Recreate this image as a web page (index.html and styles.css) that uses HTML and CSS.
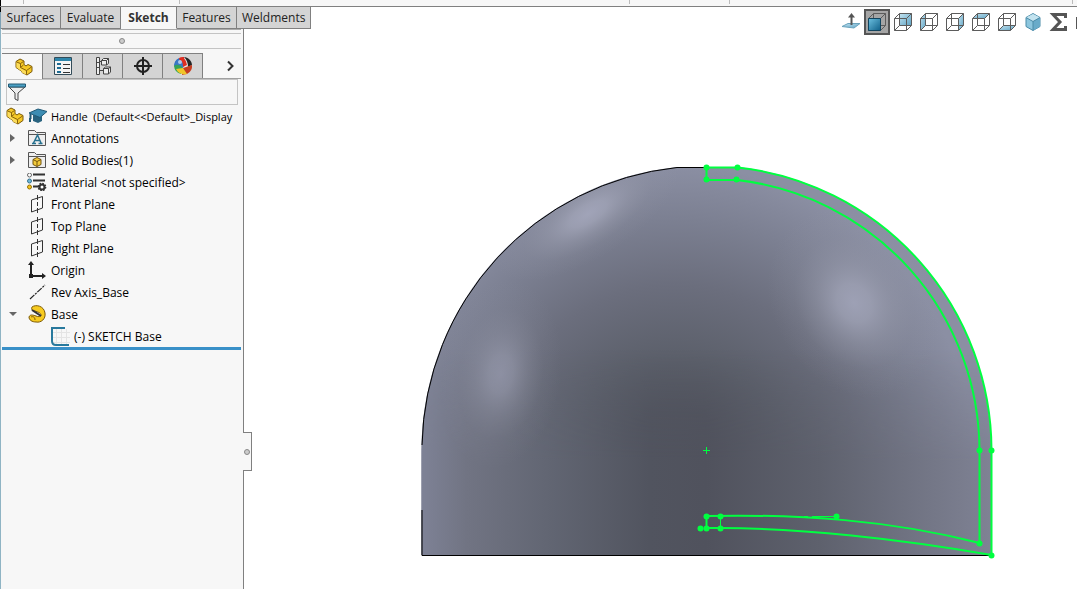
FILE: index.html
```html
<!DOCTYPE html>
<html lang="en">
<head>
    <meta charset="UTF-8">
    <meta name="viewport" content="width=device-width, initial-scale=1.0">
    <title>Handle</title>
    <link rel="stylesheet" href="styles.css">
</head>
<body>
    <!-- shared icon shapes -->
    <svg class="defs" width="0" height="0" aria-hidden="true">
        <defs>
            <linearGradient id="blue" x1="0" y1="0" x2="1" y2="1">
                <stop offset="0" stop-color="#c4e4f1"/>
                <stop offset="1" stop-color="#5fa3c4"/>
            </linearGradient>
            <linearGradient id="deep" x1="0" y1="0" x2="1" y2="1">
                <stop offset="0" stop-color="#6cc0e0"/>
                <stop offset="1" stop-color="#0f5f88"/>
            </linearGradient>
        </defs>
        <symbol id="part" viewBox="0 0 18 18">
            <path d="M1 3.500l4-2.500 4 2v3.500l2 1.500 2-1.500 4 2v5l-5 3.500-5-2.500v-1l-6-4z" fill="#f6c927" stroke="#7c5a08" stroke-linejoin="round"/>
            <path d="M1.500 4l3.500 2v4l6 3.500v3l-4-2v-1l-5.500-4z" fill="#fbdc5c"/>
            <path d="M1.500 4l4 1.500 3-2M5.500 5.500v4l6 3v4M5.500 9.500l3-2.500M11.500 12.500l5-3.500" fill="none" stroke="#8a650c"/>
        </symbol>
        <symbol id="plane" viewBox="0 0 18 18">
            <path d="M3.500 5l11-3.500v11.500l-11 4z" fill="none" stroke="#333"/>
            <path d="M9.500 0v5M9.500 7v4M9.500 13v5" stroke="#333"/>
        </symbol>
        <symbol id="folder" viewBox="0 0 18 18">
            <path d="M.5 16.500v-15h6l2 2h9v13z" fill="#eee" stroke="#555"/>
            <path d="M1 5.500h16" stroke="#555"/>
        </symbol>
        <symbol id="cube" viewBox="0 0 20 20">
            <path d="M1.500 6.500h12v12h-12zM6.500 1.500h12v12h-12zM1.500 6.500l5-5M13.500 6.500l5-5M1.500 18.500l5-5M13.500 18.500l5-5" fill="none" stroke="#5c5c5c"/>
        </symbol>
    </svg>

    <div class="ribbon"></div>
    <header class="commands">
        <nav class="tabs">
            <button class="tab">Surfaces</button>
            <button class="tab">Evaluate</button>
            <button class="tab active">Sketch</button>
            <button class="tab">Features</button>
            <button class="tab">Weldments</button>
        </nav>
        <div class="view-tools">
            <button aria-label="Normal To"><svg width="20" height="20" viewBox="0 0 20 20"><path d="M1 14.500l6-3h12l-6 4.500z" fill="url(#blue)" stroke="#6aa3bd"/><path d="M10.500 3v10" stroke="#555" stroke-width="2"/><path d="M7 5.500l3.500-4.500 3.500 4.500z" fill="#555"/></svg></button>
            <button class="pressed" aria-label="Front"><svg width="20" height="20" viewBox="0 0 20 20"><use href="#cube"/><path d="M1.500 6.500h12v12h-12z" fill="url(#deep)" stroke="#12455f"/></svg></button>
            <button aria-label="Back"><svg width="20" height="20" viewBox="0 0 20 20"><path d="M6.500 1.500h12v12h-12z" fill="url(#blue)"/><use href="#cube"/></svg></button>
            <button aria-label="Left"><svg width="20" height="20" viewBox="0 0 20 20"><path d="M1.500 6.500l5-5v12l-5 5z" fill="url(#blue)"/><use href="#cube"/></svg></button>
            <button aria-label="Right"><svg width="20" height="20" viewBox="0 0 20 20"><path d="M13.500 6.500l5-5v12l-5 5z" fill="url(#blue)"/><use href="#cube"/></svg></button>
            <button aria-label="Top"><svg width="20" height="20" viewBox="0 0 20 20"><path d="M1.500 6.500l5-5h12l-5 5z" fill="url(#blue)"/><use href="#cube"/></svg></button>
            <button aria-label="Bottom"><svg width="20" height="20" viewBox="0 0 20 20"><path d="M1.500 18.500l5-5h12l-5 5z" fill="url(#blue)"/><use href="#cube"/></svg></button>
            <button aria-label="Isometric"><svg width="20" height="20" viewBox="0 0 20 20"><path d="M10 1.500l7 4v9l-7 4-7-4v-9z" fill="#8cc6de" stroke="#4b8ba8"/><path d="M10 2l7 3.500-7 4-7-4z" fill="#c3e3ef"/><path d="M10 9.500l7-4v9l-7 4z" fill="#69abc9"/><path d="M3 5.500l7 4 7-4M10 9.500v9" fill="none" stroke="#4b8ba8"/></svg></button>
            <button aria-label="Equations"><svg width="20" height="20" viewBox="0 0 20 20"><path d="M16.500 6V2.500H4l7 7.500-7 7.500h12.500V14" fill="none" stroke="#555" stroke-width="3"/></svg></button>
            <span class="more"></span>
        </div>
    </header>

    <main class="workspace">
        <aside class="panel">
            <div class="grip"><span class="dot"></span></div>
            <div class="panel-tabs">
                <button class="panel-tab active" aria-label="Feature tree"><svg width="18" height="18"><use href="#part"/></svg></button>
                <button class="panel-tab" aria-label="Properties"><svg width="18" height="18" viewBox="0 0 18 18"><path d="M.5.500h17v17H.500z" fill="#f5f5f5" stroke="#334c59"/><path d="M1 1h16v3H1z" fill="#2f86ab"/><path d="M3 6h4v2H3zM3 10h4v2H3zM3 14h4v2H3z" fill="#1e6c94"/><path d="M9 7.500h7M9 11.500h7M9 15.500h7" stroke="#333"/></svg></button>
                <button class="panel-tab" aria-label="Configurations"><svg width="18" height="18" viewBox="0 0 18 18"><path d="M2.500.500h3v17h-3zM5.500 4.500h3M5.500 13.500h4" fill="#eee" stroke="#444"/><path d="M2.500 5.500h3M2.500 10.500h3" stroke="#444"/><path d="M7.500 3.500l2-2h5v5l-2 1.500h-5zM9.500 11.500l2-1.500h5v5l-2 2h-5z" fill="#eee" stroke="#444"/><path d="M7.500 3.500h5V8M12.500 3.500l2-2M9.500 11.500h5V17M14.500 11.500l2-1.500" fill="none" stroke="#444"/></svg></button>
                <button class="panel-tab" aria-label="Dimensions"><svg width="18" height="18" viewBox="0 0 18 18"><circle cx="9" cy="9" r="6" fill="none" stroke="#222" stroke-width="2"/><path d="M9 0v18M0 9h18" stroke="#222" stroke-width="2"/></svg></button>
                <button class="panel-tab" aria-label="Appearances"><svg width="20" height="20" viewBox="0 0 20 20"><circle cx="10" cy="10" r="9" fill="#e7e7e7"/><path d="M10 10L6 2a9 9 0 0 0-5 8l4 2z" fill="#2f6fc0"/><path d="M6 2a9 9 0 0 1 5-1l1 9-5-2z" fill="#d7281f"/><path d="M1 10c3-3 7-2 9 1l-2 7a9 9 0 0 1-7-8z" fill="#36a457"/><path d="M4 4c3-1 6 1 7 5l-1 3C8 9 5 8 1 9z" fill="#3a79c6"/><path d="M7 2c4-1 6 2 7 7l-4 2C10 7 9 4 7 2z" fill="#df2d20"/><path d="M11 1c4 0 8 4 8 8l-4 2C15 7 14 4 11 1z" fill="#252525"/><path d="M10 12l9-3a9 9 0 0 1-5 9l-5 1z" fill="#c53c20"/><path d="M3 13l7-1 4 6a9 9 0 0 1-11-5z" fill="#efc52a"/><circle cx="7" cy="6" r="2" fill="#fff" opacity=".6"/></svg></button>
                <button class="next" aria-label="More tabs"><svg width="10" height="12" viewBox="0 0 10 12"><path d="M2 1.500L6.500 6 2 10.500" fill="none" stroke="#333" stroke-width="2"/></svg></button>
            </div>
            <label class="filter">
                <svg width="18" height="18" viewBox="0 0 18 18"><path d="M1 4l6 6v6l3 1.500V10l7-6z" fill="#eee" stroke="#444"/><path d="M.5 1h17v3H.500z" fill="#4ba0c4" stroke="#245a75"/></svg>
                <input type="text" aria-label="Filter">
            </label>
            <ul class="tree">
                <li class="root">
                    <span class="lead"><svg width="18" height="18"><use href="#part"/></svg></span>
                    <span class="icon"><svg width="20" height="18" viewBox="0 0 20 18"><path d="M5 8v6l5 2 4-2V9z" fill="#28637f"/><path d="M1 6l9-4 9 2.500-7 6z" fill="#3d8db3" stroke="#215a77"/><path d="M2.500 7v5M2 11v4" fill="none" stroke="#215a77" stroke-width="2"/></svg></span>
                    <span class="name">Handle&nbsp; (Default&lt;&lt;Default&gt;_Display</span>
                </li>
                <li>
                    <span class="lead"><span class="closed"></span></span>
                    <span class="icon"><svg width="18" height="18" viewBox="0 0 18 18"><use href="#folder"/><path d="M4 14.500h4M10.500 14.500h4M5.500 14L9.500 6l3.500 8M7 11.500h5" fill="none" stroke="#26708f" stroke-width="1.500"/></svg></span>
                    <span class="name">Annotations</span>
                </li>
                <li>
                    <span class="lead"><span class="closed"></span></span>
                    <span class="icon"><svg width="18" height="18" viewBox="0 0 18 18"><use href="#folder"/><path d="M9 6.500l4 2v5L9 15.500l-4-2v-5z" fill="#f4cb3b" stroke="#73540c"/><path d="M5 8.500l4 2 4-2M9 10.500v5" fill="none" stroke="#73540c"/></svg></span>
                    <span class="name">Solid Bodies(1)</span>
                </li>
                <li>
                    <span class="lead"></span>
                    <span class="icon wide"><svg width="20" height="18" viewBox="0 0 20 18"><path d="M6 1.500h12M6 7.500h12M6 13.500h6" stroke="#333" stroke-width="2"/><circle cx="2.500" cy="2" r="2" fill="#fff" stroke="#666"/><circle cx="2.500" cy="8" r="2" fill="#6fb8da" stroke="#34728f"/><circle cx="2.500" cy="14" r="2" fill="#f4c41c" stroke="#967008"/><circle cx="15" cy="14" r="2.500" fill="#fff" stroke="#333" stroke-width="2"/><circle cx="15" cy="14" r="3.600" fill="none" stroke="#333" stroke-width="1.500" stroke-dasharray="1.600 1.200"/></svg></span>
                    <span class="name">Material &lt;not specified&gt;</span>
                </li>
                <li>
                    <span class="lead"></span>
                    <span class="icon"><svg width="18" height="18"><use href="#plane"/></svg></span>
                    <span class="name">Front Plane</span>
                </li>
                <li>
                    <span class="lead"></span>
                    <span class="icon"><svg width="18" height="18"><use href="#plane"/></svg></span>
                    <span class="name">Top Plane</span>
                </li>
                <li>
                    <span class="lead"></span>
                    <span class="icon"><svg width="18" height="18"><use href="#plane"/></svg></span>
                    <span class="name">Right Plane</span>
                </li>
                <li>
                    <span class="lead"></span>
                    <span class="icon"><svg width="18" height="18" viewBox="0 0 18 18"><path d="M3 3v12h11" fill="none" stroke="#222" stroke-width="2"/><path d="M0 4l3-4 3 4zM14 12l4 3-4 3zM1 13h4v4H1z" fill="#222"/></svg></span>
                    <span class="name">Origin</span>
                </li>
                <li>
                    <span class="lead"></span>
                    <span class="icon"><svg width="18" height="18" viewBox="0 0 18 18"><path d="M2 16L17 2" stroke="#222" stroke-width="1.200" stroke-dasharray="6 1 2 1"/></svg></span>
                    <span class="name">Rev Axis_Base</span>
                </li>
                <li>
                    <span class="lead"><span class="open"></span></span>
                    <span class="icon"><svg width="18" height="18" viewBox="0 0 18 18"><path d="M4 2C8-1 16 1 17 8c1 6-4 10-9 9-4 0-7-2-7-5 1-3 4-2 7-1 2 1 5 1 5-1 0-2-3-3-6-4C4 6 3 4 4 2z" fill="#f7cb20" stroke="#7c5a08"/><path d="M4 5l9 6" stroke="#333" stroke-width="2"/><path d="M3 12c2-1 4 0 4 3" fill="none" stroke="#7c5a08"/></svg></span>
                    <span class="name">Base</span>
                </li>
                <li class="child">
                    <span class="lead"></span>
                    <span class="icon"><svg width="19" height="19" viewBox="0 0 19 19"><path d="M5.500 2v16M10.500 2v16M15.500 2v16M2 5.500h17M2 10.500h17M2 15.500h17" stroke="#e4e4e4"/><path d="M14 1H1v13c0 3 1 4 4 4H18" fill="none" stroke="#28799d" stroke-width="2"/></svg></span>
                    <span class="name">(-) SKETCH Base</span>
                </li>
            </ul>
            <button class="splitter" aria-label="Collapse panel"><span class="dot"></span></button>
        </aside>

        <section class="canvas">
            <svg class="model" width="600" height="420" viewBox="410 150 600 420" role="img" aria-label="Handle model">
                <defs>
                    <clipPath id="body">
                        <path d="M421.500 555V450A285 285 0 0 1 677 167H738A285 285 0 0 1 991 450V555z"/>
                    </clipPath>
                    <radialGradient id="dome" gradientUnits="userSpaceOnUse" cx="675" cy="465" r="300">
                        <stop offset="0" stop-color="#4f515c"/>
                        <stop offset=".18" stop-color="#52555f"/>
                        <stop offset=".36" stop-color="#5c606b"/>
                        <stop offset=".6" stop-color="#6b6e7d"/>
                        <stop offset=".82" stop-color="#7c8092"/>
                        <stop offset="1" stop-color="#8b8fa3"/>
                    </radialGradient>
                    <linearGradient id="wall" gradientUnits="userSpaceOnUse" x1="421" y1="0" x2="991" y2="0">
                        <stop offset="0" stop-color="#7e8296"/>
                        <stop offset=".08" stop-color="#717483"/>
                        <stop offset=".22" stop-color="#626673"/>
                        <stop offset=".4" stop-color="#51545f"/>
                        <stop offset=".5" stop-color="#50525d"/>
                        <stop offset=".7" stop-color="#5e616d"/>
                        <stop offset=".85" stop-color="#6f7281"/>
                        <stop offset="1" stop-color="#7f8294"/>
                    </linearGradient>
                    <linearGradient id="fade" x1="0" y1="0" x2="0" y2="1">
                        <stop offset="0" stop-color="#000"/>
                        <stop offset=".5" stop-color="#fff"/>
                    </linearGradient>
                    <mask id="lower"><rect x="410" y="350" width="600" height="220" fill="url(#fade)"/></mask>
                    <radialGradient id="shine">
                        <stop offset="0" stop-color="#a6a9be"/>
                        <stop offset=".2" stop-color="#a3a6b9" stop-opacity=".88"/>
                        <stop offset=".45" stop-color="#9a9dae" stop-opacity=".5"/>
                        <stop offset=".7" stop-color="#9497a7" stop-opacity=".16"/>
                        <stop offset="1" stop-color="#9497a7" stop-opacity="0"/>
                    </radialGradient>
                </defs>
                <g clip-path="url(#body)">
                    <rect x="410" y="150" width="600" height="420" fill="url(#dome)"/>
                    <rect x="410" y="350" width="600" height="220" fill="url(#wall)" mask="url(#lower)"/>
                    <ellipse cx="588" cy="214" rx="105" ry="44" fill="url(#shine)" opacity=".85" transform="rotate(-32 588 214)"/>
                    <ellipse cx="854" cy="303" rx="100" ry="80" fill="url(#shine)" opacity=".8" transform="rotate(58 854 303)"/>
                    <ellipse cx="501" cy="374" rx="60" ry="95" fill="url(#shine)" opacity=".55" transform="rotate(8 501 374)"/>
                </g>
                <path d="M422 445A285 285 0 0 1 677 167.500H706M422 510V555.500H991" class="edge"/>
                <g class="sketch">
                    <path d="M706.500 180V167.500H738A285 285 0 0 1 991.500 450V555C900 539 800 528 720 528H706.500V516"/>
                    <path d="M706.500 180H737A273 273 0 0 1 979.500 450V543C890 520 800 514 706 516"/>
                    <path d="M720.500 516V528M836 516v4" class="thin"/>
                    <path d="M770 516.500H836" class="thin" stroke-dasharray="30 4 4 4"/>
                    <path d="M703 450.500h7M706.500 447v7" class="thin"/>
                </g>
                <g class="points">
                    <circle cx="706.500" cy="167.500" r="3"/>
                    <circle cx="737.500" cy="167.500" r="3"/>
                    <circle cx="706.500" cy="179.500" r="3"/>
                    <circle cx="736.500" cy="179.500" r="3"/>
                    <circle cx="979.500" cy="450.500" r="3"/>
                    <circle cx="991.500" cy="450.500" r="3"/>
                    <circle cx="979.500" cy="543.500" r="3"/>
                    <circle cx="991.500" cy="555.500" r="3"/>
                    <circle cx="706.500" cy="516.500" r="3"/>
                    <circle cx="720.500" cy="516.500" r="3"/>
                    <circle cx="836.500" cy="516.500" r="3"/>
                    <circle cx="700.500" cy="528.500" r="3"/>
                    <circle cx="706.500" cy="528.500" r="3"/>
                    <circle cx="720.500" cy="528.500" r="3"/>
                </g>
            </svg>
        </section>
    </main>
</body>
</html>
```
FILE: styles.css
```css
* {
    box-sizing: border-box;
}
body {
    margin: 0;
    min-height: 100vh;
    display: flex;
    flex-direction: column;
    overflow-x: hidden;
    background: #fff;
    color: #000;
    font-family: "Open Sans", "Noto Sans", sans-serif;
    font-size: 12px;
}
button {
    margin: 0;
    padding: 0;
    border: 0;
    background: none;
    font: inherit;
    color: inherit;
}
svg {
    display: block;
}
.defs {
    position: absolute;
}

/* command bar */
.ribbon {
    height: 7px;
    background-color: #f7f7f7;
    background-image: linear-gradient(#bbb, #bbb), linear-gradient(#bbb, #bbb), linear-gradient(#bbb, #bbb), linear-gradient(#bbb, #bbb), linear-gradient(#bbb, #bbb), linear-gradient(#000, #000);
    background-size: 1px 4px, 1px 4px, 1px 4px, 1px 4px, 1px 4px, 1px 7px;
    background-position: 23px 0, 179px 0, 629px 0, 729px 0, 1072px 0, 0 0;
    background-repeat: no-repeat;
    border-bottom: 1px solid #808080;
}
.commands {
    position: relative;
    height: 22px;
}
.tabs {
    display: flex;
    width: max-content;
    height: 22px;
    padding-left: 1px;
    background: linear-gradient(#000 5px, #7ca0b4 5px);
}
.tab {
    min-width: 60px;
    padding: 0 5px;
    background: #d4d4d4;
    border-right: 1px solid #808080;
    border-bottom: 1px solid #808080;
    color: #222;
}
.tab.active {
    min-width: 56px;
    background: #f7f7f7;
    border-bottom-color: #f7f7f7;
    color: #333;
    font-weight: bold;
}
.view-tools {
    position: absolute;
    top: 2px;
    right: 0;
    display: flex;
}
.view-tools button {
    width: 26px;
    height: 26px;
    display: flex;
    align-items: center;
    justify-content: center;
}
.view-tools .pressed {
    background: #a5a5a5;
    border: 2px solid #555;
}
.more {
    width: 5px;
    height: 12px;
    margin-top: 8px;
    border-right: 1px solid #555;
}

/* left panel */
.workspace {
    flex: 1;
    display: flex;
}
.panel {
    position: relative;
    flex: none;
    width: 244px;
    padding: 0 2px 0 1px;
    background: #f7f7f7;
    border-left: 1px solid #8fb4c4;
    border-right: 1px solid #808080;
}
.grip {
    display: flex;
    align-items: center;
    justify-content: center;
    height: 20px;
    padding-top: 4px;
    border-top: 1px solid #aaa;
    border-bottom: 1px solid #c4c4c4;
    background: linear-gradient(#c4c4c4, #c4c4c4) 0 3px / 100% 1px no-repeat;
}
.dot {
    width: 6px;
    height: 6px;
    border: 1px solid #888;
    border-radius: 50%;
    background: #ccc;
}
.panel-tabs {
    display: flex;
    height: 30px;
    padding-top: 4px;
    border-bottom: 1px solid #a0a0a0;
}
.panel-tab {
    width: 40px;
    display: flex;
    align-items: center;
    justify-content: center;
    background: #d4d4d4;
    border-top: 1px solid #808080;
    border-right: 1px solid #808080;
}
.panel-tab.active {
    width: 41px;
    height: 26px;
    padding-left: 3px;
    background: #f7f7f7;
}
.next {
    flex: 1;
    display: flex;
    align-items: center;
    justify-content: flex-end;
    padding-right: 5px;
}
.filter {
    display: flex;
    align-items: center;
    height: 26px;
    margin: 0 3px 0 4px;
    padding-left: 1px;
    border: 1px solid #c4c4c4;
}
.filter input {
    flex: 1;
    min-width: 0;
    border: 0;
    outline: 0;
    background: none;
    font: inherit;
}
.tree {
    margin: 0;
    padding: 0;
    list-style: none;
    border-bottom: 3px solid #3990c8;
}
.tree li {
    display: flex;
    align-items: center;
    height: 22px;
    overflow: hidden;
    white-space: nowrap;
}
.tree .root {
    font-size: 11px;
}
.lead {
    flex: none;
    width: 25px;
    padding-left: 7px;
}
.root .lead {
    padding-left: 4px;
}
.child .lead {
    width: 48px;
}
.icon {
    flex: none;
    width: 24px;
    padding-left: 1px;
}
.icon.wide {
    padding-left: 0;
}
.closed {
    display: block;
    width: 5px;
    height: 8px;
    margin-left: 1px;
    background: #666;
    clip-path: polygon(0 0, 100% 50%, 0 100%);
}
.open {
    display: block;
    width: 8px;
    height: 4px;
    background: #666;
    clip-path: polygon(0 0, 100% 0, 50% 100%);
}
.splitter {
    position: absolute;
    top: 403px;
    right: -9px;
    width: 9px;
    height: 39px;
    display: flex;
    align-items: center;
    justify-content: center;
    background: #f7f7f7;
    border: 1px solid #808080;
    border-left: 0;
}

/* model view */
.canvas {
    flex: 1;
    padding: 121px 0 0 166px;
}
.edge {
    fill: none;
    stroke: #000;
}
.sketch path {
    fill: none;
    stroke: #00ff40;
    stroke-width: 2;
}
.sketch .thin {
    stroke-width: 1;
}
.points {
    fill: #00ff40;
}
```
